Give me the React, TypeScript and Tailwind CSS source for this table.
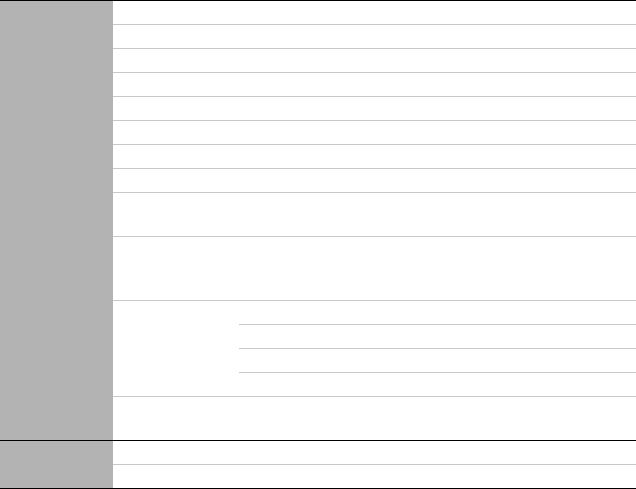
const rowLine = 'border-b border-[#c8c8c8]';

function Row({ h, last }: { h: string; last?: boolean }) {
  return <div className={`${h} ${last ? '' : rowLine}`} />;
}

function App() {
  return (
    <div className="w-[636px] h-[489px] bg-white font-['Liberation_Sans',sans-serif]">
      {/* first group */}
      <div className="flex border-t border-black">
        <div className="w-[113px] shrink-0 bg-[#b3b3b3]" />
        <div className="flex-1 flex flex-col">
          {Array.from({ length: 8 }).map((_, i) => (
            <Row key={i} h="h-[24px]" />
          ))}
          <Row h="h-[44px]" />
          <Row h="h-[64px]" />
          <div className={`flex ${rowLine}`}>
            <div className="w-[126px] shrink-0" />
            <div className="flex-1 flex flex-col">
              <Row h="h-[24px]" />
              <Row h="h-[24px]" />
              <Row h="h-[24px]" />
              <Row h="h-[23px]" last />
            </div>
          </div>
          <Row h="h-[43px]" last />
        </div>
      </div>
      {/* second group */}
      <div className="flex border-t border-b border-black">
        <div className="w-[113px] shrink-0 bg-[#b3b3b3]" />
        <div className="flex-1 flex flex-col">
          <Row h="h-[24px]" />
          <Row h="h-[23px]" last />
        </div>
      </div>
    </div>
  );
}

export default App;
